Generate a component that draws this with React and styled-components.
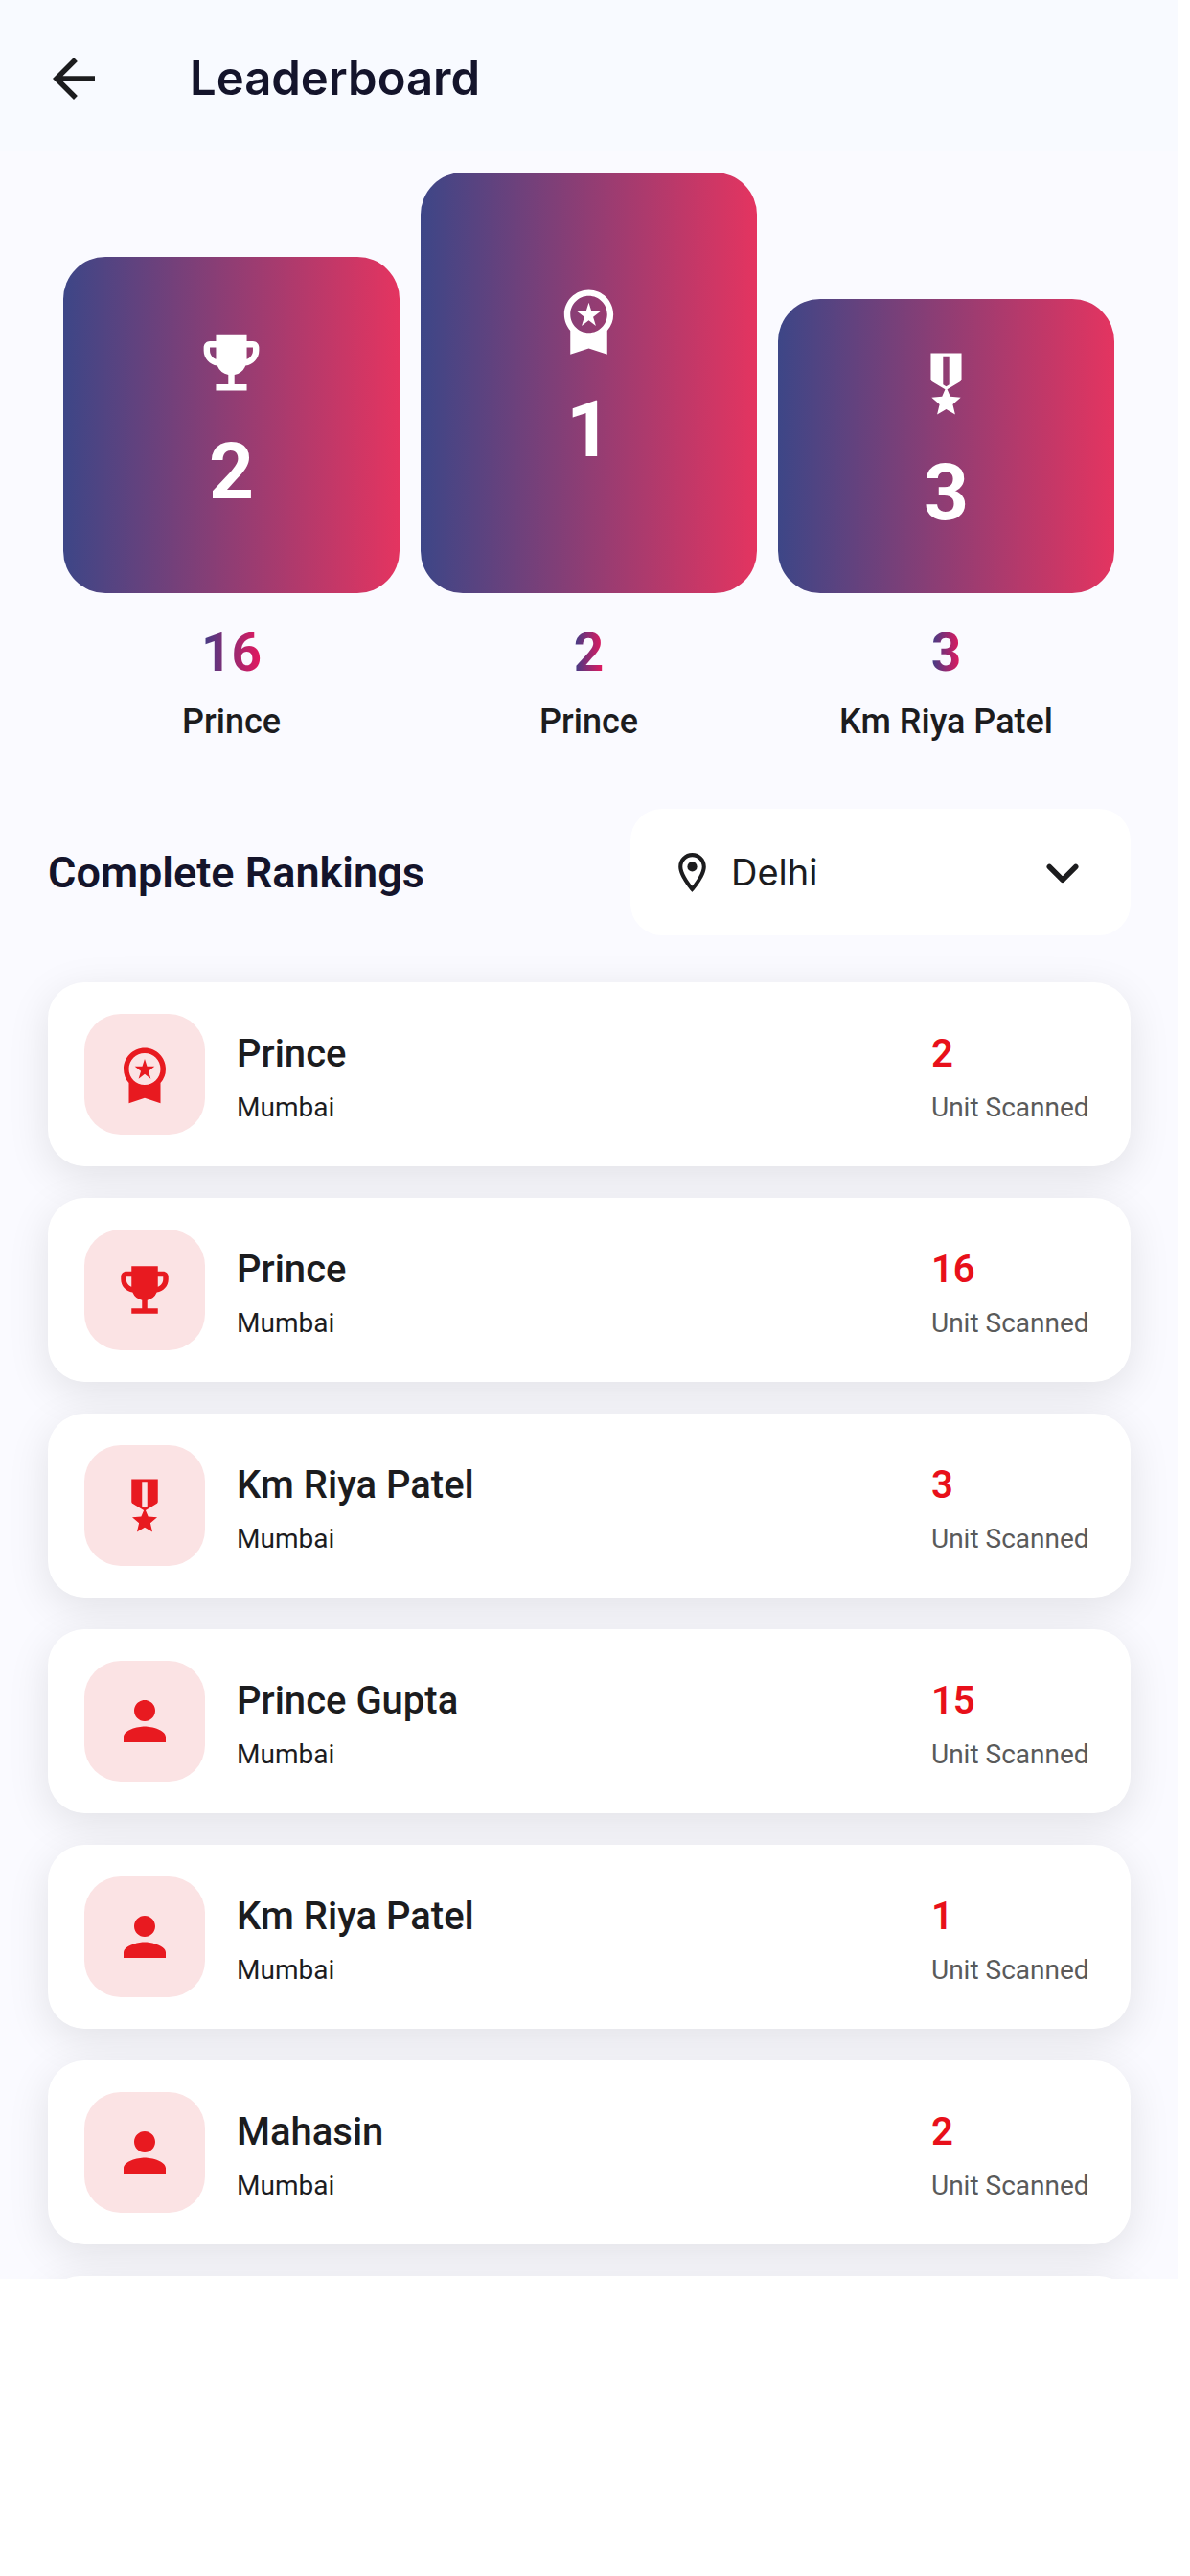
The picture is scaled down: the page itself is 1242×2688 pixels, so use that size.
import React, { useState } from 'react';
import styled, { createGlobalStyle } from 'styled-components';
import {
  MdArrowBack,
  MdEmojiEvents,
  MdMilitaryTech,
  MdOutlineLocationOn,
  MdPerson,
  MdWorkspacePremium,
} from 'react-icons/md';

const GlobalStyle = createGlobalStyle`
  * {
    box-sizing: border-box;
  }
  body {
    margin: 0;
    background: #fff;
    color: #1c1c1e;
    font-family: Roboto, sans-serif;
  }
  h1, h2, p, ol, ul {
    margin: 0;
    padding: 0;
  }
`;

const Screen = styled.div`
  display: flex;
  flex-direction: column;
  height: calc(100vh - 310px);
  margin-right: 13px;
  background: #fafaff;
  overflow: hidden;
`;

const AppBar = styled.header`
  display: flex;
  align-items: center;
  flex-shrink: 0;
  gap: 88px;
  padding: 49px 44px 43px;
  background: #f8faff;
`;

const BackButton = styled.button`
  display: flex;
  padding: 0;
  border: none;
  background: none;
  color: #1c1c1e;
  font-size: 66px;
  cursor: pointer;
`;

const Title = styled.h1`
  color: #14142b;
  font-family: Inter, sans-serif;
  font-size: 49px;
  font-weight: 600;
  line-height: 66px;
`;

const Podium = styled.ol`
  display: flex;
  align-items: flex-end;
  flex-shrink: 0;
  gap: 22px;
  padding: 22px 66px 0;
  list-style: none;
`;

const Place = styled.li`
  flex: 1;
  display: flex;
  flex-direction: column;
  align-items: center;
`;

const Step = styled.div`
  display: flex;
  flex-direction: column;
  align-items: center;
  justify-content: center;
  gap: 20px;
  width: 100%;
  height: ${props => props.$height}px;
  border-radius: 44px;
  background: linear-gradient(to right, #3d4687, #e43460);
  color: #fff;
  font-size: 77px;
`;

const Position = styled.span`
  font-size: 82px;
  font-weight: 700;
  line-height: 110px;
`;

const Score = styled.p`
  margin-top: 24px;
  background: linear-gradient(to right, #3d3d87, #e8175d);
  background-clip: text;
  color: transparent;
  font-size: 55px;
  font-weight: 700;
  line-height: 77px;
`;

const PlaceName = styled.p`
  margin-top: 11px;
  font-size: 36px;
  font-weight: 500;
  line-height: 44px;
`;

const Toolbar = styled.div`
  display: flex;
  align-items: center;
  justify-content: space-between;
  flex-shrink: 0;
  padding: 69px 49px 49px 50px;
`;

const Heading = styled.h2`
  color: #14142b;
  font-size: 45px;
  font-weight: 600;
`;

const CityPicker = styled.label`
  display: flex;
  align-items: center;
  gap: 16px;
  width: 522px;
  height: 132px;
  padding: 0 38px 0 40px;
  border-radius: 33px;
  background: #fff;
  font-size: 49px;
`;

const CitySelect = styled.select`
  flex: 1;
  border: none;
  outline: none;
  appearance: none;
  background: none;
  color: #1c1c1e;
  font-family: Inter, sans-serif;
  font-size: 38px;
`;

const Chevron = styled.svg`
  width: 66px;
  height: 66px;
  fill: none;
  stroke: #1c1c1e;
  stroke-width: 2;
  stroke-linecap: round;
  stroke-linejoin: round;
`;

const Rankings = styled.ul`
  display: flex;
  flex-direction: column;
  gap: 33px;
  padding: 0 49px 0 50px;
  list-style: none;
`;

const Row = styled.li`
  display: flex;
  align-items: center;
  flex-shrink: 0;
  gap: 33px;
  padding: 33px 38px;
  border-radius: 38px;
  background: #fff;
  box-shadow: 0 11px 44px rgba(0, 0, 0, 0.1);
`;

const Badge = styled.div`
  display: flex;
  align-items: center;
  justify-content: center;
  width: 126px;
  height: 126px;
  border-radius: 38px;
  background: #fbe3e4;
  color: #e81a20;
  font-size: 66px;
`;

const Person = styled.div`
  flex: 1;
  padding-top: 4px;
`;

const Units = styled.div`
  width: 170px;
  padding-top: 4px;
  white-space: nowrap;
`;

const Primary = styled.p`
  color: ${props => (props.$accent ? '#e8101a' : '#1c1c1e')};
  font-size: 40px;
  font-weight: ${props => (props.$accent ? 600 : 500)};
  line-height: 55px;
`;

const Secondary = styled.p`
  margin-top: 10px;
  color: ${props => (props.$muted ? '#5a5a5a' : '#1c1c1e')};
  font-size: 28px;
  line-height: 38px;
`;

const podium = [
  { position: 2, icon: MdEmojiEvents, score: 16, name: 'Prince', height: 351 },
  { position: 1, icon: MdWorkspacePremium, score: 2, name: 'Prince', height: 439 },
  { position: 3, icon: MdMilitaryTech, score: 3, name: 'Km Riya Patel', height: 307 },
];

const rankings = [
  { id: 1, name: 'Prince', city: 'Mumbai', units: 2, icon: MdWorkspacePremium },
  { id: 2, name: 'Prince', city: 'Mumbai', units: 16, icon: MdEmojiEvents },
  { id: 3, name: 'Km Riya Patel', city: 'Mumbai', units: 3, icon: MdMilitaryTech },
  { id: 4, name: 'Prince Gupta', city: 'Mumbai', units: 15, icon: MdPerson },
  { id: 5, name: 'Km Riya Patel', city: 'Mumbai', units: 1, icon: MdPerson },
  { id: 6, name: 'Mahasin', city: 'Mumbai', units: 2, icon: MdPerson },
];

const App = () => {
  const [city, setCity] = useState('Delhi');

  return (
    <Screen>
      <GlobalStyle />
      <AppBar>
        <BackButton type="button" aria-label="Back">
          <MdArrowBack />
        </BackButton>
        <Title>Leaderboard</Title>
      </AppBar>
      <Podium>
        {podium.map(({ position, icon: Icon, score, name, height }) => (
          <Place key={position}>
            <Step $height={height}>
              <Icon />
              <Position>{position}</Position>
            </Step>
            <Score>{score}</Score>
            <PlaceName>{name}</PlaceName>
          </Place>
        ))}
      </Podium>
      <Toolbar>
        <Heading>Complete Rankings</Heading>
        <CityPicker>
          <MdOutlineLocationOn />
          <CitySelect aria-label="City" value={city} onChange={e => setCity(e.target.value)}>
            <option>Delhi</option>
            <option>Mumbai</option>
          </CitySelect>
          <Chevron viewBox="0 0 24 24">
            <path d="M7 10l5 5 5-5" />
          </Chevron>
        </CityPicker>
      </Toolbar>
      <Rankings>
        {rankings.map(({ id, name, city: home, units, icon: Icon }) => (
          <Row key={id}>
            <Badge>
              <Icon />
            </Badge>
            <Person>
              <Primary>{name}</Primary>
              <Secondary>{home}</Secondary>
            </Person>
            <Units>
              <Primary $accent>{units}</Primary>
              <Secondary $muted>Unit Scanned</Secondary>
            </Units>
          </Row>
        ))}
        <Row />
      </Rankings>
    </Screen>
  );
};

export default App;
